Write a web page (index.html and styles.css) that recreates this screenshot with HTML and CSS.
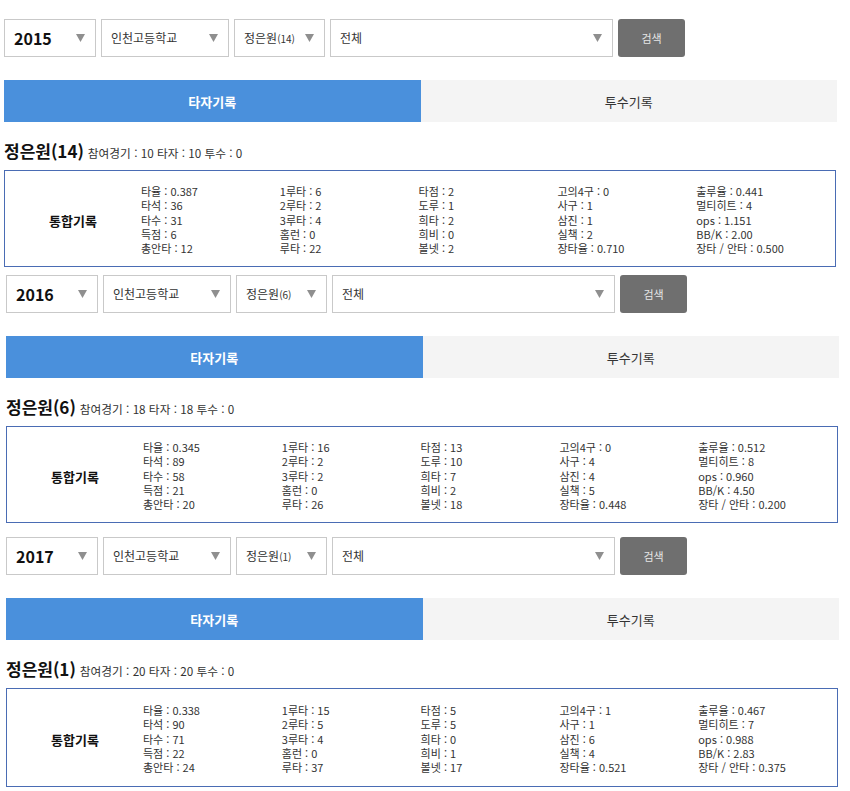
FILE: index.html
```html
<!DOCTYPE html>
<html lang="ko">
<head>
<meta charset="utf-8">
<title>선수기록</title>
<link rel="stylesheet" href="styles.css">
</head>
<body>

<section class="record record-1">
  <div class="filters">
    <div class="select w-year"><span class="year">2015</span><svg class="arrow" viewBox="0 0 9 8"><polygon points="0,0 9,0 4.5,8"/></svg></div>
    <div class="select w-school"><span>인천고등학교</span><svg class="arrow" viewBox="0 0 9 8"><polygon points="0,0 9,0 4.5,8"/></svg></div>
    <div class="select w-player"><span>정은원<small>(14)</small></span><svg class="arrow" viewBox="0 0 9 8"><polygon points="0,0 9,0 4.5,8"/></svg></div>
    <div class="select w-all"><span>전체</span><svg class="arrow" viewBox="0 0 9 8"><polygon points="0,0 9,0 4.5,8"/></svg></div>
    <div class="btn">검색</div>
  </div>
  <div class="tabs">
    <div class="tab active">타자기록</div>
    <div class="tab off">투수기록</div>
  </div>
  <div class="player-head"><span class="name">정은원(14)</span><span class="meta">참여경기 : 10 타자 : 10 투수 : 0</span></div>
  <div class="box">
    <div class="label">통합기록</div>
    <div class="col"><span>타율 : 0.387</span><span>타석 : 36</span><span>타수 : 31</span><span>득점 : 6</span><span>총안타 : 12</span></div>
    <div class="col"><span>1루타 : 6</span><span>2루타 : 2</span><span>3루타 : 4</span><span>홈런 : 0</span><span>루타 : 22</span></div>
    <div class="col"><span>타점 : 2</span><span>도루 : 1</span><span>희타 : 2</span><span>희비 : 0</span><span>볼넷 : 2</span></div>
    <div class="col"><span>고의4구 : 0</span><span>사구 : 1</span><span>삼진 : 1</span><span>실책 : 2</span><span>장타율 : 0.710</span></div>
    <div class="col"><span>출루율 : 0.441</span><span>멀티히트 : 4</span><span>ops : 1.151</span><span>BB/K : 2.00</span><span>장타 / 안타 : 0.500</span></div>
  </div>
</section>

<section class="record record-2">
  <div class="filters">
    <div class="select w-year"><span class="year">2016</span><svg class="arrow" viewBox="0 0 9 8"><polygon points="0,0 9,0 4.5,8"/></svg></div>
    <div class="select w-school"><span>인천고등학교</span><svg class="arrow" viewBox="0 0 9 8"><polygon points="0,0 9,0 4.5,8"/></svg></div>
    <div class="select w-player"><span>정은원<small>(6)</small></span><svg class="arrow" viewBox="0 0 9 8"><polygon points="0,0 9,0 4.5,8"/></svg></div>
    <div class="select w-all"><span>전체</span><svg class="arrow" viewBox="0 0 9 8"><polygon points="0,0 9,0 4.5,8"/></svg></div>
    <div class="btn">검색</div>
  </div>
  <div class="tabs">
    <div class="tab active">타자기록</div>
    <div class="tab off">투수기록</div>
  </div>
  <div class="player-head"><span class="name">정은원(6)</span><span class="meta">참여경기 : 18 타자 : 18 투수 : 0</span></div>
  <div class="box">
    <div class="label">통합기록</div>
    <div class="col"><span>타율 : 0.345</span><span>타석 : 89</span><span>타수 : 58</span><span>득점 : 21</span><span>총안타 : 20</span></div>
    <div class="col"><span>1루타 : 16</span><span>2루타 : 2</span><span>3루타 : 2</span><span>홈런 : 0</span><span>루타 : 26</span></div>
    <div class="col"><span>타점 : 13</span><span>도루 : 10</span><span>희타 : 7</span><span>희비 : 2</span><span>볼넷 : 18</span></div>
    <div class="col"><span>고의4구 : 0</span><span>사구 : 4</span><span>삼진 : 4</span><span>실책 : 5</span><span>장타율 : 0.448</span></div>
    <div class="col"><span>출루율 : 0.512</span><span>멀티히트 : 8</span><span>ops : 0.960</span><span>BB/K : 4.50</span><span>장타 / 안타 : 0.200</span></div>
  </div>
</section>

<section class="record record-3">
  <div class="filters">
    <div class="select w-year"><span class="year">2017</span><svg class="arrow" viewBox="0 0 9 8"><polygon points="0,0 9,0 4.5,8"/></svg></div>
    <div class="select w-school"><span>인천고등학교</span><svg class="arrow" viewBox="0 0 9 8"><polygon points="0,0 9,0 4.5,8"/></svg></div>
    <div class="select w-player"><span>정은원<small>(1)</small></span><svg class="arrow" viewBox="0 0 9 8"><polygon points="0,0 9,0 4.5,8"/></svg></div>
    <div class="select w-all"><span>전체</span><svg class="arrow" viewBox="0 0 9 8"><polygon points="0,0 9,0 4.5,8"/></svg></div>
    <div class="btn">검색</div>
  </div>
  <div class="tabs">
    <div class="tab active">타자기록</div>
    <div class="tab off">투수기록</div>
  </div>
  <div class="player-head"><span class="name">정은원(1)</span><span class="meta">참여경기 : 20 타자 : 20 투수 : 0</span></div>
  <div class="box box-tall">
    <div class="label">통합기록</div>
    <div class="col"><span>타율 : 0.338</span><span>타석 : 90</span><span>타수 : 71</span><span>득점 : 22</span><span>총안타 : 24</span></div>
    <div class="col"><span>1루타 : 15</span><span>2루타 : 5</span><span>3루타 : 4</span><span>홈런 : 0</span><span>루타 : 37</span></div>
    <div class="col"><span>타점 : 5</span><span>도루 : 5</span><span>희타 : 0</span><span>희비 : 1</span><span>볼넷 : 17</span></div>
    <div class="col"><span>고의4구 : 1</span><span>사구 : 1</span><span>삼진 : 6</span><span>실책 : 4</span><span>장타율 : 0.521</span></div>
    <div class="col"><span>출루율 : 0.467</span><span>멀티히트 : 7</span><span>ops : 0.988</span><span>BB/K : 2.83</span><span>장타 / 안타 : 0.375</span></div>
  </div>
</section>

</body>
</html>
```

FILE: styles.css
```css
* {
  box-sizing: border-box;
}

body {
  margin: 0;
  background: #ffffff;
  color: #333333;
  font-family: "Noto Sans CJK KR", "Noto Sans", sans-serif;
}

.record {
  width: 839px;
  padding-left: 4px;
}

.record-1 {
  padding-top: 19px;
}

.record-2 {
  margin-top: 8px;
  padding-left: 6px;
}

.record-3 {
  margin-top: 14px;
  padding-left: 6px;
}

/* filter row */
.filters {
  display: flex;
  gap: 5px;
  height: 38px;
}

.select {
  display: flex;
  align-items: center;
  justify-content: space-between;
  height: 38px;
  padding: 0 10px 0 9px;
  border: 1px solid #c9c9c9;
  background: #ffffff;
  font-size: 12px;
  line-height: 1;
  color: #333333;
}

.select small {
  font-size: 10px;
}

.select .year {
  font-size: 16px;
  font-weight: bold;
  color: #111111;
}

.arrow {
  width: 9px;
  height: 8px;
  fill: #8f8f8f;
  flex: none;
}

.w-year { width: 92px; }
.w-school { width: 128px; }
.w-player { width: 91px; }
.w-all { width: 283px; }

.btn {
  display: flex;
  align-items: center;
  justify-content: center;
  width: 67px;
  height: 38px;
  border-radius: 3px;
  background: #6f6f6f;
  color: #e6e6e6;
  font-size: 11px;
}

/* tabs */
.tabs {
  display: flex;
  width: 833px;
  height: 42px;
  margin-top: 23px;
}

.tab {
  flex: 1;
  display: flex;
  align-items: center;
  justify-content: center;
  font-size: 13px;
}

.tab.active {
  background: #4a90dc;
  color: #ffffff;
  font-weight: bold;
}

.tab.off {
  background: #f4f4f4;
  color: #333333;
}

/* player heading */
.player-head {
  display: flex;
  align-items: baseline;
  gap: 4px;
  height: 24px;
  margin: 17px 0 7px;
  line-height: 24px;
}

.name {
  font-size: 17px;
  font-weight: bold;
  color: #111111;
}

.meta {
  font-size: 11.7px;
  color: #333333;
}

/* stats box */
.box {
  display: grid;
  grid-template-columns: 136px repeat(5, 1fr);
  width: 832px;
  height: 97px;
  padding: 13px 0 10px;
  border: 1px solid #4a6cb4;
}

.box-tall {
  height: 99px;
  padding-top: 14px;
}

.label {
  display: flex;
  align-items: center;
  justify-content: center;
  font-size: 13px;
  font-weight: bold;
  color: #111111;
}

.col {
  display: flex;
  flex-direction: column;
  font-size: 11px;
  color: #333333;
  white-space: nowrap;
}

.col span {
  display: block;
  height: 14.3px;
  line-height: 14.3px;
}
```
